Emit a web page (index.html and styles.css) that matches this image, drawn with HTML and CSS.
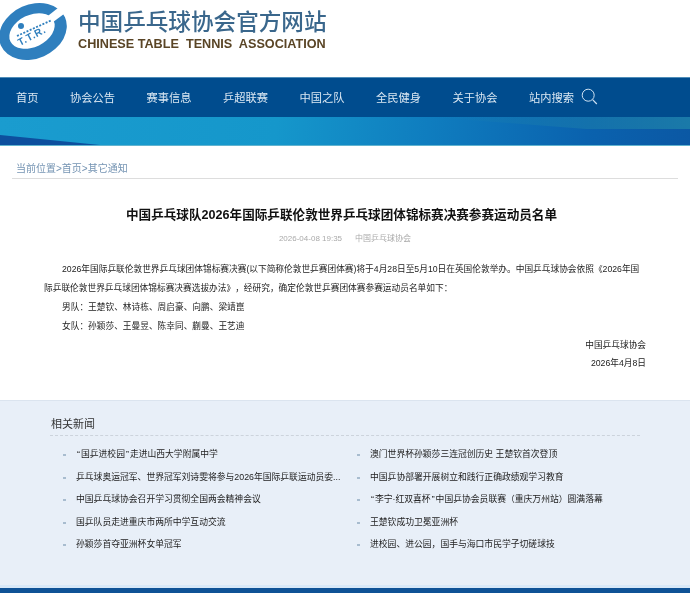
FILE: index.html
```html
<!DOCTYPE html>
<html lang="zh-CN">

<head>
    <meta charset="UTF-8">
    <title>中国乒乓球协会官方网站</title>
    <link rel="stylesheet" href="styles.css">
</head>

<body>
    <div class="header">
        <svg class="logo" width="67" height="62" viewBox="0 0 67 62">
            <ellipse cx="33" cy="31.500" rx="35" ry="27" transform="rotate(-24 33 31.500)" fill="#2f7fbe" />
            <ellipse cx="32" cy="31" rx="24" ry="16" transform="rotate(-26 32 31)" fill="#fff" />
            <path d="M44 19 L63 4 L68 11 L49 25 Z" fill="#fff" />
            <circle cx="21" cy="26" r="3" fill="#2f7fbe" />
            <path d="M17 36 L52 20" stroke="#2f7fbe" stroke-width="1.8" stroke-dasharray="2 1.5" fill="none" />
            <text class="logoText" x="20" y="46" transform="rotate(-28 20 46)">T.T.R.</text>
        </svg>
        <div class="brand">
            <div class="brandName">中国乒乓球协会官方网站</div>
            <div class="brandEn">CHINESE TABLE&nbsp; TENNIS&nbsp; ASSOCIATION</div>
        </div>
    </div>

    <div class="nav">
        <a>首页</a>
        <a>协会公告</a>
        <a>赛事信息</a>
        <a>乒超联赛</a>
        <a>中国之队</a>
        <a>全民健身</a>
        <a>关于协会</a>
        <a>站内搜索</a>
        <svg class="searchIcon" width="17" height="17" viewBox="0 0 17 17">
            <circle cx="7.2" cy="7.2" r="6" stroke="#cfe2f3" stroke-width="1" fill="none" />
            <path d="M11.6 11.6 L15.8 16" stroke="#cfe2f3" stroke-width="1.2" fill="none" />
        </svg>
    </div>
    <div class="banner"></div>

    <div class="crumb">当前位置&gt;首页&gt;其它通知</div>

    <div class="article">
        <h1 class="articleTitle">中国乒乓球队2026年国际乒联伦敦世界乒乓球团体锦标赛决赛参赛运动员名单</h1>
        <div class="articleMeta">
            <span>2026-04-08 19:35</span>
            <span>中国乒乓球协会</span>
        </div>
        <p class="indent">2026年国际乒联伦敦世界乒乓球团体锦标赛决赛(以下简称伦敦世乒赛团体赛)将于4月28日至5月10日在英国伦敦举办。中国乒乓球协会依照《2026年国际乒联伦敦世界乒乓球团体锦标赛决赛选拔办法》，经研究，确定伦敦世乒赛团体赛参赛运动员名单如下：</p>
        <p class="indent">男队：王楚钦、林诗栋、周启豪、向鹏、梁靖崑</p>
        <p class="indent">女队：孙颖莎、王曼昱、陈幸同、蒯曼、王艺迪</p>
        <p class="sign">中国乒乓球协会</p>
        <p class="sign">2026年4月8日</p>
    </div>

    <div class="related">
        <div class="relatedHead">相关新闻</div>
        <div class="relatedGrid">
            <ul class="newsList">
                <li><span class="quote">“</span>国乒进校园<span class="quote">”</span>走进山西大学附属中学</li>
                <li>乒乓球奥运冠军、世界冠军刘诗雯将参与2026年国际乒联运动员委...</li>
                <li>中国乒乓球协会召开学习贯彻全国两会精神会议</li>
                <li>国乒队员走进重庆市两所中学互动交流</li>
                <li>孙颖莎首夺亚洲杯女单冠军</li>
            </ul>
            <ul class="newsList">
                <li>澳门世界杯孙颖莎三连冠创历史 王楚钦首次登顶</li>
                <li>中国乒协部署开展树立和践行正确政绩观学习教育</li>
                <li><span class="quote">“</span>李宁·红双喜杯<span class="quote">”</span>中国乒协会员联赛（重庆万州站）圆满落幕</li>
                <li>王楚钦成功卫冕亚洲杯</li>
                <li>进校园、进公园，国手与海口市民学子切磋球技</li>
            </ul>
        </div>
    </div>
    <div class="footer"></div>
</body>

</html>
```

FILE: styles.css
```css
* {
    margin: 0;
    padding: 0;
    list-style-type: none;
}

html {
    width: 100%;
    height: 100%;
}

body {
    width: 100%;
    height: 593px;
    overflow: hidden;
    background-color: white;
    font-family: "Liberation Sans", "Noto Sans CJK SC", sans-serif;
    color: #222;
    text-spacing-trim: space-all;
    /* 参考图本身比较糊 */
    filter: blur(0.35px);
}

.header {
    height: 77px;
    display: flex;
    align-items: flex-start;
    gap: 11px;
}

.logo {
    flex: none;
}

.logoText {
    font-size: 10px;
    font-weight: bold;
    fill: #2f7fbe;
    letter-spacing: 0.8px;
}

.brand {
    padding-top: 9px;
}

.brandName {
    font-size: 22.6px;
    line-height: 28px;
    font-weight: 500;
    color: #3a678c;
    white-space: nowrap;
}

.brandEn {
    font-size: 12.65px;
    line-height: 15px;
    font-weight: bold;
    color: #5a4526;
    white-space: nowrap;
}

.nav {
    height: 40px;
    display: flex;
    align-items: center;
    gap: 31.5px;
    padding-left: 16px;
    padding-bottom: 2px;
    background-color: #004c8e;
    border-top: 1px solid #4f8db8;
    box-sizing: border-box;
    color: #dbe8f3;
    font-size: 11.25px;
}

.searchIcon {
    margin-left: -25px;
}

.banner {
    height: 29px;
    position: relative;
    overflow: hidden;
    background-image: linear-gradient(96deg, #1a9ccf 0%, #1597cb 40%, #0f7dbf 62%, #0a62ae 85%, #0b58a4 100%);
    border-bottom: 1px solid #62b4cf;
    box-sizing: border-box;
}

.banner::before {
    content: ' ';
    position: absolute;
    left: 0;
    bottom: 0;
    width: 100px;
    height: 10px;
    background-color: #0d4f9e;
    clip-path: polygon(0 0, 100% 100%, 0 100%);
}

.banner::after {
    content: ' ';
    position: absolute;
    right: 0;
    top: 0;
    width: 260px;
    height: 12px;
    background-image: linear-gradient(to right, rgba(30, 130, 170, 0), rgba(30, 130, 170, 0.8));
    clip-path: polygon(0 0, 100% 0, 100% 100%, 60% 100%);
}

.crumb {
    margin: 0 12px;
    padding: 16px 4px 3px;
    height: 33px;
    box-sizing: border-box;
    border-bottom: 1px solid #ddd;
    font-size: 10px;
    line-height: 14px;
    color: #7594b3;
}

.article {
    height: 221px;
    box-sizing: border-box;
    padding: 27px 44px 0;
    font-size: 8.7px;
    line-height: 19px;
}

.articleTitle {
    margin-left: -7px;
    font-size: 12.6px;
    line-height: 18px;
    text-align: center;
    color: #111;
    white-space: nowrap;
}

.articleMeta {
    margin-top: 8px;
    margin-bottom: 14px;
    display: flex;
    justify-content: center;
    gap: 13px;
    font-size: 8px;
    line-height: 14px;
    color: #aaa;
}

.indent {
    text-indent: 18px;
}

.sign {
    text-align: right;
    line-height: 18px;
}

.related {
    height: 188px;
    padding: 15px 50px 0 50px;
    box-sizing: border-box;
    background-color: #e8eff8;
    border-top: 1px solid #dbe4ef;
    border-bottom: 3px solid #d8e8f8;
}

.relatedHead {
    padding-left: 1px;
    padding-bottom: 3px;
    font-size: 11px;
    line-height: 16px;
    color: #333;
    border-bottom: 1px dashed #ccd3dc;
}

.relatedGrid {
    display: grid;
    grid-template-columns: 294px 1fr;
    margin-top: 7px;
}

.newsList li {
    position: relative;
    padding-left: 26px;
    font-size: 8.8px;
    line-height: 22.5px;
    white-space: nowrap;
}

.newsList li::before {
    content: ' ';
    position: absolute;
    left: 13px;
    top: 11px;
    width: 3px;
    height: 2px;
    background-color: #a8bccf;
}

.quote {
    padding: 0 1px;
}

.footer {
    height: 5px;
    background-color: #0f5296;
}
```
